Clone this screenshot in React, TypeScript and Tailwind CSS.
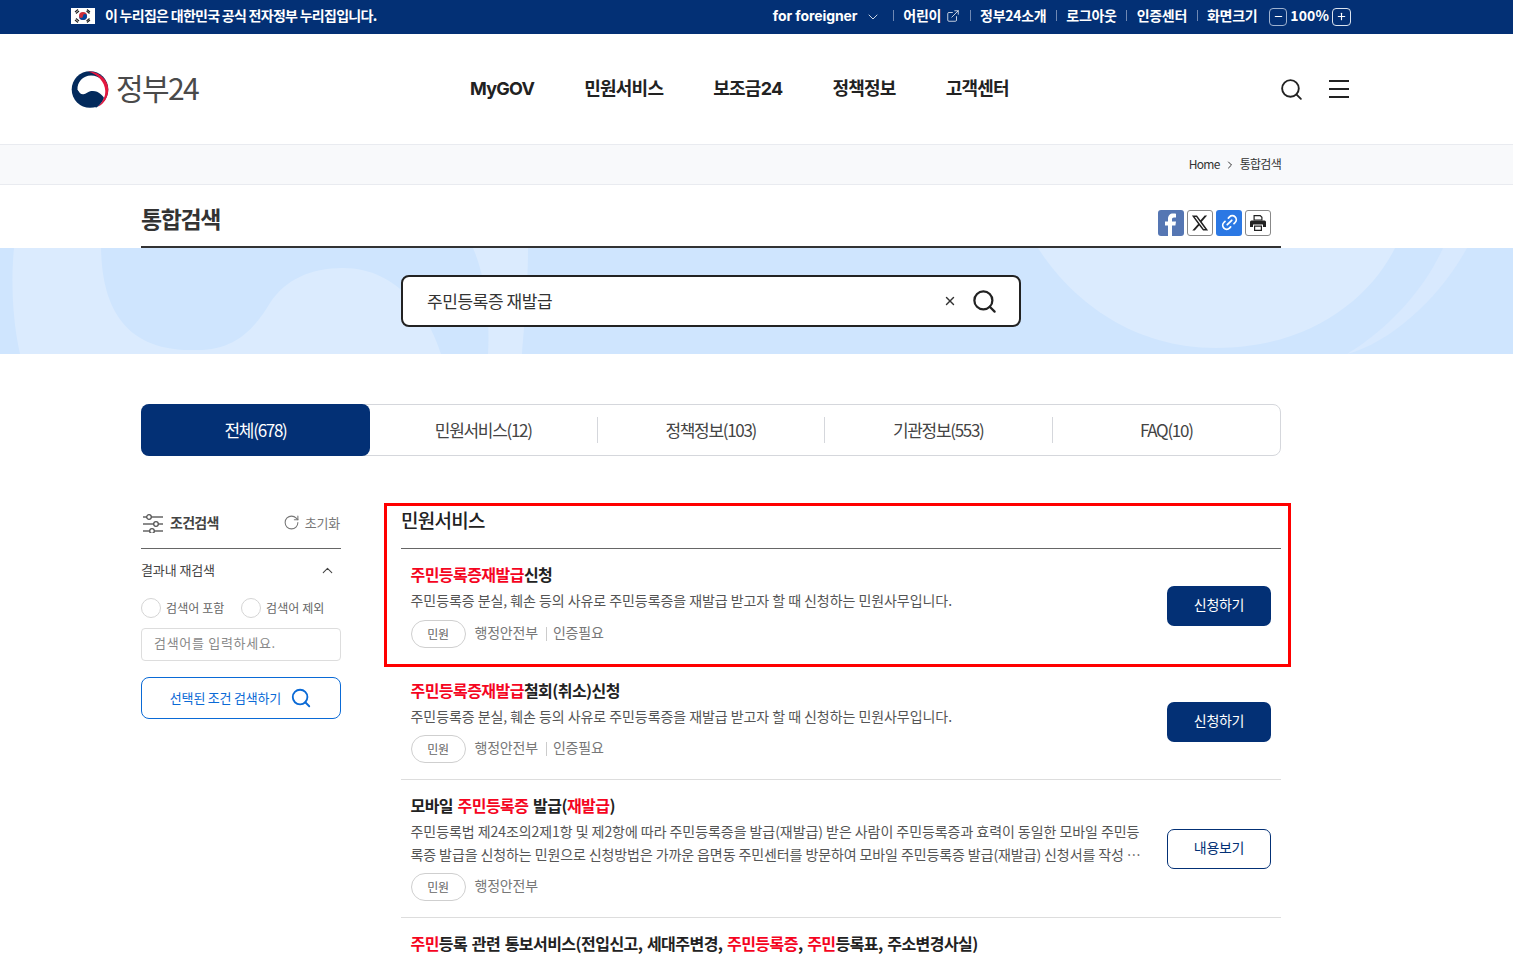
import { ChevronDown, ChevronUp, Search, X, ExternalLink, RotateCw, Link2, ChevronRight, Minus, Plus } from "lucide-react";

const font = "[font-family:'Inter','Noto_Sans_CJK_KR','Noto_Sans',sans-serif]";
const kr = "[font-family:'Noto_Sans_CJK_KR','Noto_Sans',sans-serif]";

function Flag() {
  return (
    <svg width="24" height="16" viewBox="0 0 24 16" className="shrink-0">
      <rect width="24" height="16" fill="#fff" />
      <circle cx="12" cy="8" r="4" fill="#cd2e3a" />
      <path d="M8 8a4 4 0 0 0 8 0 2 2 0 0 0-4 0 2 2 0 0 1-4 0z" fill="#0047a0" />
      <path d="M4 4l3-2.500M5 5.500l3-2.500M16 1.500l3 2.500M15.500 3l3 2.500M4 12l3 2.500M5 10.500l3 2.500M16 14.500l3-2.500M15.500 13l3-2.500" stroke="#222" strokeWidth="1.100" />
    </svg>
  );
}

function Logo() {
  return (
    <svg width="38" height="37" viewBox="0 0 38 37" className="shrink-0">
      <circle cx="19" cy="18.500" r="18.300" fill="#032a5c" />
      <path d="M6.500 19C6 11 12 4.500 20 4.500C29 4.500 35 11 35 19C35 26 32 32 26 36C20 30 12 28 6.500 19z" fill="#fff" />
      <path d="M6.700 19C8 22 10 23.500 12.500 23.200C15 23 17 20.500 20 20C24 19.500 27 20.500 29.500 23C31 24.500 32.500 25.500 33 27C32 30 29 34 25.500 36.500L10 33L3 20z" fill="#032a5c" />
      <path d="M17 .5C27 .2 37.300 8 37.300 18.500C37.300 26 33 33 27 35.800C31.500 31 34.500 26 34.300 20C34 11 27 3.500 17 .5z" fill="#e4173e" />
    </svg>
  );
}

function SliderIcon() {
  return (
    <svg width="20" height="20" viewBox="0 0 20 20" className="shrink-0">
      <path d="M0 4h20M0 11h20M0 18h20" stroke="#666" strokeWidth="1.300" />
      <circle cx="6" cy="4" r="2.300" fill="#fff" stroke="#555" strokeWidth="1.300" />
      <circle cx="13" cy="11" r="2.300" fill="#fff" stroke="#555" strokeWidth="1.300" />
      <circle cx="9" cy="18" r="2.300" fill="#fff" stroke="#555" strokeWidth="1.300" />
    </svg>
  );
}

function PrinterIcon() {
  return (
    <svg width="18" height="18" viewBox="0 0 18 18">
      <path d="M4.500 1h7l2 2v3.500h-9z M5.700 2.200v3.300h6.600V3.500l-1.300-1.300z" fill="#222" fillRule="evenodd" />
      <path d="M2.500 6.500h13a1.500 1.500 0 0 1 1.500 1.500v5h-3v-2.500H4V13H1V8a1.500 1.500 0 0 1 1.500-1.500z" fill="#222" />
      <path d="M5 11.500h8V17H5z M6.200 12.700v3.100h5.600v-3.100z" fill="#222" fillRule="evenodd" />
    </svg>
  );
}

function Hit({ t }: { t: string }) {
  return <span className="text-[#f5051f]">{t}</span>;
}

function Sep() {
  return <span className="mx-[9.500px] h-[11px] w-px bg-[#6f88b3]" />;
}

function Meta({ auth }: { auth?: boolean }) {
  return (
    <div className="flex items-center text-[14px] tracking-[-0.2px] text-[#777]">
      <span className="flex h-[28px] w-[55px] items-center justify-center rounded-full border border-[#cfcfcf] pb-[1px] text-[12px] text-[#666]">
        민원
      </span>
      <span className="ml-[9px] pb-[3px]">행정안전부</span>
      {auth && <span className="ml-[8px] mr-[6px] h-[14px] w-px bg-[#ccc]" />}
      {auth && <span className="pb-[3px]">인증필요</span>}
    </div>
  );
}

const titleCls = "text-[16px] font-bold leading-[24px] tracking-[-0.55px] [word-spacing:1.500px]";
const descCls = "mt-[3px] text-[14px] tracking-[-0.06px] text-[#555]";
const tabs = ["민원서비스(12)", "정책정보(103)", "기관정보(553)", "FAQ(10)"];

export default function App() {
  return (
    <div className={`${kr} h-[957px] overflow-hidden bg-white text-[#222]`}>
      {/* top bar */}
      <div className="flex h-[34px] items-center justify-between bg-[#033075] pb-[3px] pl-[71px] pr-[162px] text-[14px] font-bold text-white">
        <div className="flex items-center gap-[10px] tracking-[-0.72px]">
          <Flag />
          <span>이 누리집은 대한민국 공식 전자정부 누리집입니다.</span>
        </div>
        <div className="flex items-center tracking-[-0.3px]">
          <span className={`${font} tracking-[-0.1px]`}>for foreigner</span>
          <ChevronDown size={16} strokeWidth={1.2} className="ml-[8px] mr-[2px] mt-[3px]" />
          <Sep />
          <span>어린이</span>
          <ExternalLink size={14} strokeWidth={1.3} className="ml-[5px] mt-[1px]" />
          <Sep />
          <span>정부24소개</span>
          <Sep />
          <span>로그아웃</span>
          <Sep />
          <span>인증센터</span>
          <Sep />
          <span>화면크기</span>
          <span className="ml-[12px] mt-[2px] flex h-[18px] w-[18px] items-center justify-center rounded-[4px] border border-[#9fb2cf]">
            <Minus size={11} strokeWidth={2.5} />
          </span>
          <span className="mx-[3px] tracking-[0.1px]">100%</span>
          <span className="mt-[2px] flex h-[18px] w-[19px] items-center justify-center rounded-[4px] border border-[#dbe3ee]">
            <Plus size={11} strokeWidth={2.5} />
          </span>
        </div>
      </div>

      {/* header */}
      <header className="flex h-[110px] items-center pl-[71px] pr-[162px]">
        <div className="flex w-[399px] items-center gap-[7px]">
          <Logo />
          <span className="pb-[5px] text-[30px] font-normal leading-none tracking-[-1.600px] text-[#4a4a4a]">정부24</span>
        </div>
        <nav className={`${font} flex items-center gap-[50px] pb-[1px] text-[18px] font-bold tracking-[-0.75px] text-[#222]`}>
          <span>MyGOV</span>
          <span>민원서비스</span>
          <span>보조금24</span>
          <span>정책정보</span>
          <span>고객센터</span>
        </nav>
        <div className="ml-auto mr-[2px] flex items-center gap-[25px]">
          <Search size={25} strokeWidth={1.8} className="text-[#222]" />
          <svg width="20" height="20" viewBox="0 0 20 20">
            <path d="M0 2h20M0 10h20M0 18h20" stroke="#222" strokeWidth="2" />
          </svg>
        </div>
      </header>

      {/* breadcrumb */}
      <div className="h-[41px] border-y border-[#e9ebf0] bg-[#f8f9fb]">
        <div className="ml-[141px] flex h-full w-[1140px] items-center justify-end pb-[2px] text-[12px] tracking-[-0.7px] text-[#333]">
          <span>Home</span>
          <ChevronRight size={12} className="mx-[4px] mt-[3px]" />
          <span>통합검색</span>
        </div>
      </div>

      {/* title */}
      <div className="ml-[141px] flex h-[63px] w-[1140px] items-center justify-between border-b-2 border-[#333]">
        <h1 className="mt-[6px] text-[23px] font-bold tracking-[-1.400px] text-[#333]">통합검색</h1>
        <div className="mr-[10px] mt-[14px] flex gap-[3px]">
          <span className="flex h-[26px] w-[26px] items-end justify-center overflow-hidden rounded-[3px] bg-[#5576b3]">
            <svg width="14" height="23" viewBox="0 0 14 23">
              <path d="M4 23V12.500H1V8.500h3V6c0-3.500 2-5.500 5-5.500 1.500 0 3 .2 3 .2V4.500h-2C8.500 4.500 8 5.300 8 6.500v2h4l-.6 4H8V23z" fill="#fff" />
            </svg>
          </span>
          <span className="flex h-[26px] w-[26px] items-center justify-center rounded-[3px] border border-[#888]">
            <svg width="18" height="18" viewBox="0 0 24 24">
              <path d="M18.200 2h3.300l-7.200 8.300L22.800 22h-6.700l-5.200-6.800L5 22H1.700l7.700-8.800L1.200 2H8l4.700 6.200zM17 20h1.800L7 3.900H5z" fill="#222" />
            </svg>
          </span>
          <span className="flex h-[26px] w-[26px] items-center justify-center rounded-[3px] bg-[#2b78e4]">
            <Link2 size={19} strokeWidth={2.2} className="-rotate-45 text-white" />
          </span>
          <span className="flex h-[26px] w-[26px] items-center justify-center rounded-[3px] border border-[#888]">
            <PrinterIcon />
          </span>
        </div>
      </div>

      {/* search banner */}
      <div className="relative h-[106px] overflow-hidden bg-[#cfe5fe] pt-[27px]">
        <svg className="absolute inset-0" width="1513" height="106" viewBox="0 0 1513 106">
          <path d="M14 0H101C102 50 118 104 195 102C235 103 255 80 270 55C285 32 310 20 343 20C400 20 430 70 441 106H20C12 70 11 30 14 0z" fill="#dbebfe" />
          <path d="M473 0H528C528 40 524 80 522 106H488C490 70 486 30 473 0z" fill="#dbebfe" />
          <path d="M1038 0C1070 50 1130 100 1216 100C1310 100 1370 50 1395 0z" fill="#dbebfe" />
          <path d="M1443 0H1467C1440 50 1390 95 1347 106C1390 80 1425 40 1443 0z" fill="#d8e9fe" />
        </svg>
        <div className="relative ml-[401px] flex h-[52px] w-[620px] items-center justify-between rounded-[8px] border-2 border-[#222] bg-white pl-[24px] pr-[21px]">
          <span className="text-[17px] tracking-[-0.4px] text-[#333]">주민등록증 재발급</span>
          <div className="flex items-center gap-[14px]">
            <X size={14} strokeWidth={2.4} className="text-[#333]" />
            <Search size={27} strokeWidth={2} className="text-[#222]" />
          </div>
        </div>
      </div>

      {/* tabs */}
      <div className="ml-[141px] mt-[50px] flex h-[52px] w-[1140px] items-center rounded-[8px] border border-[#d5d7dc] text-[17px] tracking-[-1.300px] text-[#444]">
        <div className="-my-px -ml-px flex h-[52px] w-[229px] items-center justify-center rounded-[8px] bg-[#033075] text-white">
          전체(678)
        </div>
        {tabs.map((t, i) => (
          <div key={t} className={`flex h-[26px] w-[227.500px] items-center justify-center ${i < 3 ? "border-r border-[#d5d7dc]" : ""}`}>
            {t}
          </div>
        ))}
      </div>

      {/* body */}
      <div className="ml-[141px] mt-[47px] flex w-[1140px] items-start gap-[60px]">
        <aside className="w-[200px] shrink-0">
          <div className="flex h-[46px] items-center justify-between border-b border-[#666] pb-[6px]">
            <div className="flex items-center gap-[7px] pl-[2px] text-[14px] font-bold tracking-[-0.7px] text-[#444]">
              <SliderIcon />
              조건검색
            </div>
            <div className="flex items-center gap-[5px] pr-[1px] text-[13px] tracking-[-0.2px] text-[#777]">
              <RotateCw size={17} strokeWidth={1.5} className="text-[#777]" />
              초기화
            </div>
          </div>
          <div className="flex h-[44px] items-center justify-between pb-[2px] pr-[5px] text-[13px] tracking-[-0.1px] text-[#444]">
            결과내 재검색
            <ChevronUp size={17} strokeWidth={1.5} />
          </div>
          <div className="mt-[5px] flex items-center text-[12px] tracking-[0.1px] text-[#666]">
            <span className="h-[20px] w-[20px] rounded-full border border-[#d5d5d5]" />
            <span className="ml-[5px] w-[75px]">검색어 포함</span>
            <span className="h-[20px] w-[20px] rounded-full border border-[#d5d5d5]" />
            <span className="ml-[5px]">검색어 제외</span>
          </div>
          <div className="mt-[10px] flex h-[33px] items-center rounded-[4px] border border-[#ddd] pb-[3px] pl-[12px] text-[13px] tracking-[0.7px] text-[#888]">
            검색어를 입력하세요.
          </div>
          <div className="mt-[16px] flex h-[42px] items-center justify-center gap-[9px] rounded-[8px] border border-[#0a6ad6] text-[13px] tracking-[-0.2px] text-[#0a6ad6]">
            선택된 조건 검색하기
            <Search size={22} strokeWidth={2} />
          </div>
        </aside>

        <main className="relative w-[880px] shrink-0">
          {/* red highlight frame */}
          <div className="pointer-events-none absolute -left-[17px] top-0 h-[164px] w-[907px] border-[3px] border-[#f00]" />
          <h2 className="h-[46px] border-b border-[#666] text-[19px] font-medium leading-[34px] tracking-[-0.7px] text-[#222]">민원서비스</h2>

          <div className="flex h-[116px] items-start justify-between pl-[9.500px] pr-[10px] pt-[13px]">
            <div>
              <p className={titleCls}><Hit t="주민등록증재발급" />신청</p>
              <p className={`${descCls} leading-[22px]`}>주민등록증 분실, 훼손 등의 사유로 주민등록증을 재발급 받고자 할 때 신청하는 민원사무입니다.</p>
              <div className="mt-[9px]"><Meta auth /></div>
            </div>
            <button className="mt-[24px] h-[40px] w-[104px] rounded-[7px] bg-[#033075] pb-[3px] text-[14px] tracking-[-0.3px] text-white">신청하기</button>
          </div>

          <div className="flex h-[115px] items-start justify-between border-b border-[#ddd] pl-[9.500px] pr-[10px] pt-[13px]">
            <div>
              <p className={titleCls}><Hit t="주민등록증재발급" />철회(취소)신청</p>
              <p className={`${descCls} leading-[22px]`}>주민등록증 분실, 훼손 등의 사유로 주민등록증을 재발급 받고자 할 때 신청하는 민원사무입니다.</p>
              <div className="mt-[8px]"><Meta auth /></div>
            </div>
            <button className="mt-[24px] h-[40px] w-[104px] rounded-[7px] bg-[#033075] pb-[3px] text-[14px] tracking-[-0.3px] text-white">신청하기</button>
          </div>

          <div className="flex h-[138px] items-start justify-between border-b border-[#ddd] pl-[9.500px] pr-[10px] pt-[13px]">
            <div>
              <p className={titleCls}>모바일 <Hit t="주민등록증" /> 발급(<Hit t="재발급" />)</p>
              <p className={`${descCls} whitespace-nowrap leading-[23px]`}>
                주민등록법 제24조의2제1항 및 제2항에 따라 주민등록증을 발급(재발급) 받은 사람이 주민등록증과 효력이 동일한 모바일 주민등
                <br />
                <span className="tracking-[-0.1px]">록증 발급을 신청하는 민원으로 신청방법은 가까운 읍면동 주민센터를 방문하여 모바일 주민등록증 발급(재발급) 신청서를 작성 …</span>
              </p>
              <div className="mt-[7px]"><Meta /></div>
            </div>
            <button className="mt-[36px] h-[40px] w-[104px] rounded-[7px] border border-[#033075] pb-[3px] text-[14px] tracking-[-0.3px] text-[#033075]">내용보기</button>
          </div>

          <div className="pl-[9.500px] pt-[13px]">
            <p className={titleCls}><Hit t="주민" />등록 관련 통보서비스(전입신고, 세대주변경, <Hit t="주민등록증" />, <Hit t="주민" />등록표, 주소변경사실)</p>
          </div>
        </main>
      </div>
    </div>
  );
}
